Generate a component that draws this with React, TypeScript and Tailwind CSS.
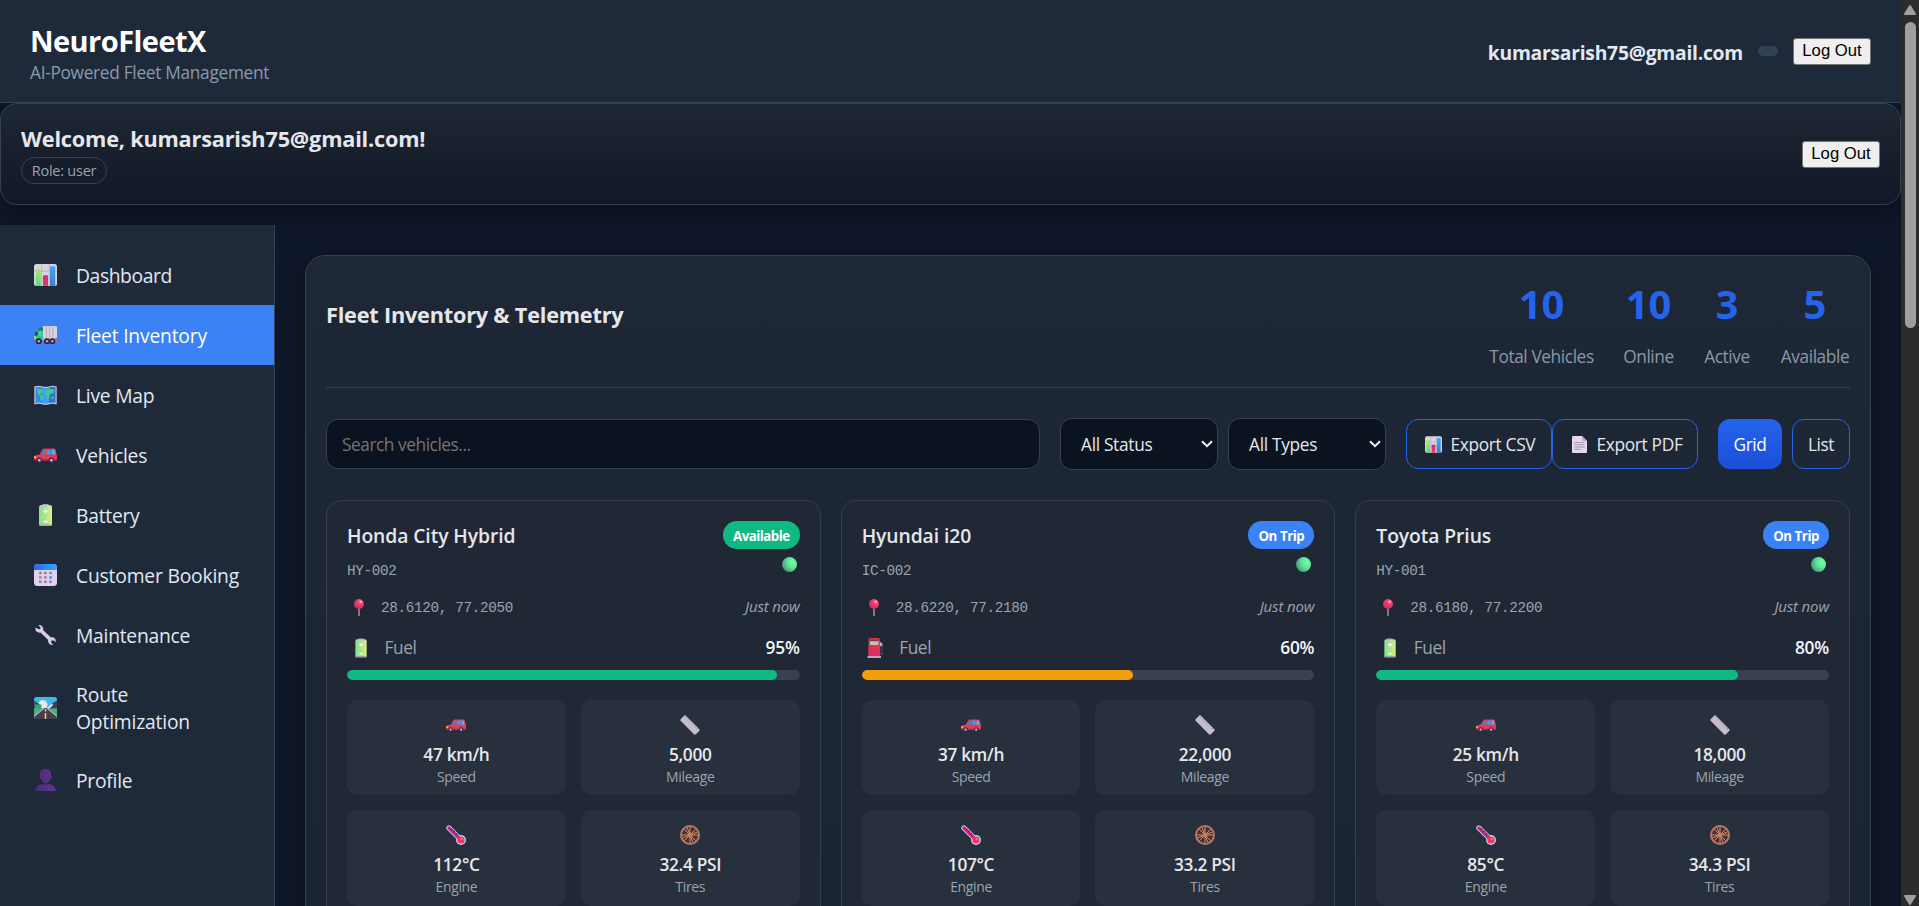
import type { ReactNode } from "react";

type IconProps = { className?: string };

const ChartIcon = ({ className }: IconProps) => (
  <svg className={className} viewBox="0 0 23 22">
    <defs>
      <linearGradient id="cg" x1="0" y1="0" x2="0" y2="1"><stop offset="0" stopColor="#b4e85a" /><stop offset="1" stopColor="#4fdc8a" /></linearGradient>
      <linearGradient id="cr" x1="0" y1="0" x2="0" y2="1"><stop offset="0" stopColor="#c92f72" /><stop offset="1" stopColor="#f0386a" /></linearGradient>
      <linearGradient id="cb" x1="0" y1="0" x2="0" y2="1"><stop offset="0" stopColor="#3fa9f2" /><stop offset="1" stopColor="#3b7fd0" /></linearGradient>
    </defs>
    <rect width="23" height="22" rx="2.5" fill="#d9d2e0" />
    <path d="M7.7 0v22M15.2 0v22M0 7.3h23M0 14.6h23" stroke="#bdb4c6" strokeWidth="0.9" />
    <rect x="1.8" y="5" width="5" height="17" rx="0.8" fill="url(#cg)" />
    <rect x="9" y="11.2" width="5" height="10.8" rx="0.8" fill="url(#cr)" />
    <rect x="16" y="2.2" width="5.2" height="19.8" rx="0.8" fill="url(#cb)" />
  </svg>
);

const TruckIcon = ({ className }: IconProps) => (
  <svg className={className} viewBox="0 0 23 22">
    <rect x="8.8" y="2" width="14.2" height="12.5" rx="1" fill="#d9d2dd" />
    <path d="M12.300 2v12.500M15.600 2v12.500M19 2v12.500" stroke="#b4abba" strokeWidth="1" />
    <path d="M2.600 5.500Q4.500 4 9 4V16H0V11.500Z" fill="#35c489" />
    <path d="M3.500 5.200Q6 3.600 9 3.800V6.500H3Z" fill="#237a55" />
    <path d="M1.600 7.500H3.600V11.500H.600Z" fill="#1c3c62" />
    <path d="M4.800 7.500H8V12H4.500Z" fill="#46c8c0" />
    <rect x="0" y="12.300" width="2" height="2.200" fill="#ffb43d" />
    <path d="M8.500 14.300H23V16.500H8.500Z" fill="#c5bbcb" />
    <rect x="21.300" y="14" width="1.700" height="2" fill="#e8427a" />
    {[4.8, 13, 18.4].map((x) => (
      <g key={x}><circle cx={x} cy="17.300" r="3" fill="#33213f" /><circle cx={x} cy="17.300" r="1.200" fill="#b9aec0" /></g>
    ))}
  </svg>
);

const MapIcon = ({ className }: IconProps) => (
  <svg className={className} viewBox="0 0 23 22">
    <path d="M.300 2.500Q4 1 7.700 2.200Q11.500 3.400 15.300 2.200Q19 1 22.700 2.500V20.500Q19 19.200 15.300 20.200Q11.500 21.400 7.700 20.200Q4 19.200.300 20.500Z" fill="#c9bfe0" />
    <path d="M1.500 3.300Q5 2.200 8 3.400V19Q5 18 1.500 19Z" fill="#2f8fe0" />
    <path d="M8 3.400Q11.500 4.500 15 3.400V19Q11.500 20.200 8 19Z" fill="#3aa0ef" />
    <path d="M15 3.400Q18.500 2.200 21.500 3.300V19Q18.500 18 15 19Z" fill="#2878cf" />
    <path d="M2.500 5.500L6 5L8.800 6.500L8.200 8.500L6.500 9L6.300 10.500L8.800 12.300L9.300 13.500L7.600 17L6.500 16L6.300 12.500L4.500 10.500Z" fill="#47c98c" />
    <path d="M11 6.500L14 6L16 4.800L20 5.500L20.300 8L18 10L16.500 9.200L15.800 10.500L14.500 14.500L13 14.800L12.500 11.500L10.800 10.500L11 8.800L12.500 8Z" fill="#47c98c" />
    <circle cx="18.600" cy="13.800" r="1.300" fill="#47c98c" />
  </svg>
);

const CarIcon = ({ className }: IconProps) => (
  <svg className={className} viewBox="0 0 23 22">
    <path d="M8 6Q8.600 4.600 10.500 4.600H20Q21.400 4.600 21.700 6L23 12V15.500Q23 16.600 21.500 16.600H1.500Q0 16.600 0 15V13.500Q0 11.600 2 11.200L5.500 10.500Z" fill="#e93a4e" />
    <path d="M7 10.400L9.400 6.500Q9.800 5.800 10.800 5.800H12V10.600Z" fill="#2b8be0" />
    <path d="M13 5.800H16.800V10.600H13Z" fill="#3f9bef" />
    <path d="M17.800 5.800H19.800Q20.500 5.800 20.700 6.500L21.600 10.600H17.800Z" fill="#4db4f8" />
    <rect x="0" y="12.300" width="2.200" height="2" rx="0.800" fill="#ffd24a" />
    <path d="M.300 15.200H22.800V16.600H.800Z" fill="#a3284f" />
    {[5.3, 17.4].map((x) => (
      <g key={x}><circle cx={x} cy="16.300" r="2.700" fill="#46295a" /><circle cx={x} cy="16.300" r="1.250" fill="#cfc3dc" /></g>
    ))}
  </svg>
);

const BatteryIcon = ({ className }: IconProps) => (
  <svg className={className} viewBox="0 0 23 22">
    <defs>
      <linearGradient id="bt"><stop offset="0" stopColor="#86dd92" /><stop offset="0.500" stopColor="#a8e58c" /><stop offset="1" stopColor="#dcf283" /></linearGradient>
    </defs>
    <path d="M8.500 0H14.500V1.500H8.500Z" fill="#a9a3ab" />
    <path d="M5.500 2.200Q5.500 .900 7 .900H16Q17.800 .900 17.800 2.200V3H5.200Z" fill="#c9c3c9" />
    <rect x="5" y="2.500" width="13" height="18.500" fill="url(#bt)" />
    <path d="M5 20.600H18V21Q18 22 17 22H6Q5 22 5 21Z" fill="#a79fab" />
    <path d="M11.500 5.200V9.200M9.500 7.200H13.500M9.500 17.500H13.500" stroke="#fff" strokeWidth="1.400" />
  </svg>
);

const CalendarIcon = ({ className }: IconProps) => (
  <svg className={className} viewBox="0 0 23 22">
    <defs>
      <linearGradient id="cal"><stop offset="0" stopColor="#2f62e8" /><stop offset="0.600" stopColor="#2c93fb" /><stop offset="1" stopColor="#31a2fb" /></linearGradient>
    </defs>
    <rect width="23" height="22" rx="3.500" fill="#dfd2ee" />
    <path d="M0 6V3.500Q0 0 3.500 0H19.500Q23 0 23 3.500V6Z" fill="url(#cal)" />
    {[7.8, 12.2, 16.6].map((y, r) =>
      [5, 10, 15.2].map((x, c) => (
        <rect key={`${x}-${y}`} x={x} y={y} width="2.700" height="2.400" rx="0.500" fill={r === 1 && c === 2 ? "#2a90f5" : "#8f83a0"} />
      ))
    )}
  </svg>
);

const WrenchIcon = ({ className }: IconProps) => (
  <svg className={className} viewBox="0 0 23 22">
    <path d="M4.200 1.200L6.500 3.200L6.300 4.800L4.800 5.200L1.600 3.500Q.800 6 2.500 7.600Q4 9 6.400 8.500L14 15.700Q13.600 18.200 15.500 20Q17 21.200 19.200 20.800L17 18.500L17.600 16.700L19.400 16.200L21.600 18.300Q22.300 16 20.700 14.300Q19.200 12.900 16.700 13.300L9.300 6.200Q9.700 3.700 8.100 2.200Q6.400.700 4.200 1.200Z" fill="#d9cbe6" />
  </svg>
);

const RoadIcon = ({ className }: IconProps) => (
  <svg className={className} viewBox="0 0 23 22">
    <defs><clipPath id="rc"><rect width="23" height="22" rx="2.500" /></clipPath></defs>
    <g clipPath="url(#rc)">
      <rect width="23" height="22" fill="#3fb8ea" />
      <path d="M4 11Q3 4 8.500 3Q13 3.500 13.500 8L12 12Z" fill="#ece8ee" />
      <path d="M12 12L18 6.500L23 3.500V12Z" fill="#4b3b56" />
      <path d="M13.500 10.500L18 6.500L19 8L15 12H12Z" fill="#f0ecf2" />
      <path d="M0 3.500L5.500 7V11.500H0Z" fill="#44505f" />
      <path d="M1 7.500H7.500V12H1Z" fill="#36a578" />
      <path d="M0 11.500H23V22H0Z" fill="#4fae7d" />
      <path d="M10.500 11H12.500L23 20V22H0V20Z" fill="#473b4d" />
      <path d="M10.300 11.200L0 19.600M12.700 11.200L23 19.600" stroke="#d5ccd9" strokeWidth="0.800" />
      <path d="M11.500 12V14.500M11.500 16V22" stroke="#ffc93d" strokeWidth="1.500" />
    </g>
  </svg>
);

const ProfileIcon = ({ className }: IconProps) => (
  <svg className={className} viewBox="0 0 23 22">
    <defs>
      <linearGradient id="pf" x1="0" y1="0" x2="1" y2="0"><stop offset="0" stopColor="#4a2a72" /><stop offset="1" stopColor="#5e3690" /></linearGradient>
    </defs>
    <path d="M6 4Q6 0 11.500 0Q17 0 17 4V6.500Q18 7 17.500 8.500Q17.200 9.500 16.600 9.500Q15.800 12 14 13.200V15Q21.500 16 22 22H1Q1.500 16 9 15V13.200Q7.200 12 6.400 9.500Q5.800 9.500 5.500 8.500Q5 7 6 6.500Z" fill="url(#pf)" />
    <path d="M9 13.600Q11.500 15 14 13.600V15Q11.500 16.400 9 15Z" fill="#3d2160" />
  </svg>
);

const PageIcon = ({ className }: IconProps) => (
  <svg className={className} viewBox="0 0 15 17">
    <path d="M1.500 0H10L15 5V16Q15 17 14 17H1Q0 17 0 16V1.200Q0 0 1.500 0Z" fill="#e4d8ee" />
    <path d="M10 0L15 5H11Q10 5 10 4Z" fill="#b9a9c8" />
    <path d="M2.500 6.500H12.500M2.500 8.800H12.500M2.500 11H12.500M2.500 13.200H8.500" stroke="#9a8bab" strokeWidth="0.900" />
  </svg>
);

const PinIcon = ({ className }: IconProps) => (
  <svg className={className} viewBox="0 0 10 17">
    <defs><radialGradient id="pin" cx="0.650" cy="0.300" r="0.700"><stop offset="0" stopColor="#ff7aa0" /><stop offset="0.400" stopColor="#f5386d" /><stop offset="1" stopColor="#c8305e" /></radialGradient></defs>
    <path d="M5 9.500V17" stroke="#8f8599" strokeWidth="1.700" />
    <circle cx="5" cy="5" r="5" fill="url(#pin)" />
    <circle cx="6.800" cy="2.800" r="1" fill="#ffc3d4" />
  </svg>
);

const PumpIcon = ({ className }: IconProps) => (
  <svg className={className} viewBox="0 0 20 20">
    <path d="M13.500 3.500L16.200 5.800V16.500H14V8" fill="none" stroke="#5d3f4e" strokeWidth="1.200" />
    <path d="M2.500 2Q2.500 0 4.500 0H12Q14 0 14 2V18H2.500Z" fill="#e53246" />
    <path d="M2.500 11H14V18H2.500Z" fill="#d63167" />
    <rect x="4" y="1.500" width="8.500" height="5.500" fill="#5d4456" />
    <path d="M4 3.200H12.500V7H4Z" fill="#c9bcc9" />
    <path d="M14 4L16.200 5.500V8H14Z" fill="#b9aebb" />
    <rect x="1.500" y="18" width="13.500" height="2" fill="#c1a5b6" />
  </svg>
);

const RulerIcon = ({ className }: IconProps) => (
  <svg className={className} viewBox="0 0 20 20">
    <path d="M4.300.600Q5 0 5.700.600L19.400 14.200Q20 15 19.400 15.700L15.600 19.400Q14.800 20 14.200 19.400L.600 5.800Q0 5 .600 4.300Z" fill="#c5bdcb" />
    <path d="M6.500 1.800L5.400 2.900M8.800 4L7.700 5.100M11 6.200L9.900 7.300M13.200 8.500L12.100 9.600M15.500 10.800L14.400 11.900M17.700 13L16.600 14.100" stroke="#8d6fd0" strokeWidth="1" />
  </svg>
);

const ThermoIcon = ({ className }: IconProps) => (
  <svg className={className} viewBox="0 0 20 20">
    <path d="M2.900 2.900L14 14" stroke="#a9d4f5" strokeWidth="5.200" strokeLinecap="round" />
    <circle cx="15" cy="15" r="5" fill="#a9d4f5" />
    <path d="M2.900 2.900L14 14" stroke="#d81b78" strokeWidth="3.200" strokeLinecap="round" />
    <path d="M6.300 3.700L5.200 4.800M8.700 6L7.600 7.100M11 8.300L9.900 9.400" stroke="#3c2a55" strokeWidth="1.300" />
    <circle cx="15" cy="15" r="3.600" fill="#f8315f" />
    <circle cx="15.700" cy="14" r="1.100" fill="#ff7d94" />
  </svg>
);

const WheelIcon = ({ className }: IconProps) => (
  <svg className={className} viewBox="0 0 20 20">
    <circle cx="10" cy="10" r="9" fill="#4c302f" stroke="#b8766b" strokeWidth="2" />
    <path d="M10 2V18M2 10H18M4.300 4.300L15.700 15.700M15.700 4.300L4.300 15.700M7 2.600L13 17.400M17.400 7L2.600 13" stroke="#e0a070" strokeWidth="0.900" />
    <circle cx="10" cy="10" r="2.500" fill="#c27c68" />
  </svg>
);

const GreenDot = ({ className }: IconProps) => (
  <svg className={className} viewBox="0 0 15 15">
    <defs><radialGradient id="gd" cx="0.750" cy="0.350" r="0.800"><stop offset="0" stopColor="#72ffa6" /><stop offset="0.450" stopColor="#5fe797" /><stop offset="1" stopColor="#478f80" /></radialGradient></defs>
    <circle cx="7.500" cy="7.500" r="7.500" fill="url(#gd)" />
  </svg>
);

const Chevron = () => (
  <svg className="h-[8px] w-[12px]" viewBox="0 0 12 8" fill="none">
    <path d="M1 1.200L6 6.200L11 1.200" stroke="#f1f5f9" strokeWidth="2" />
  </svg>
);

function LogOut() {
  return (
    <button className="h-[27px] w-[78px] rounded-[3px] border border-[#767676] bg-[#efefef] pt-px font-['Liberation_Sans',sans-serif] text-[16.67px] leading-none text-black">
      Log Out
    </button>
  );
}

const nav: { label: ReactNode; Icon: (p: IconProps) => ReactNode; active?: boolean; tall?: boolean }[] = [
  { label: <span className="tracking-[-0.400px]">Dashboard</span>, Icon: ChartIcon },
  { label: <span className="tracking-[-0.200px]">Fleet Inventory</span>, Icon: TruckIcon, active: true },
  { label: "Live Map", Icon: MapIcon },
  { label: "Vehicles", Icon: CarIcon },
  { label: "Battery", Icon: BatteryIcon },
  { label: <span className="tracking-[-0.200px]">Customer Booking</span>, Icon: CalendarIcon },
  { label: "Maintenance", Icon: WrenchIcon },
  { label: <span className="tracking-[-0.180px]">Route Optimization</span>, Icon: RoadIcon, tall: true },
  { label: "Profile", Icon: ProfileIcon },
];

const stats = [
  { value: "10", label: "Total Vehicles", w: "w-[104px]" },
  { value: "10", label: "Online", w: "w-[51px]" },
  { value: "3", label: "Active", w: "w-[47px]" },
  { value: "5", label: "Available", w: "w-[70px]" },
];

const vehicles = [
  { name: "Honda City Hybrid", id: "HY-002", status: "Available", pos: "28.6120, 77.2050", fuel: 95, electric: true, speed: 47, mileage: "5,000", temp: 112, psi: "32.4" },
  { name: "Hyundai i20", id: "IC-002", status: "On Trip", pos: "28.6220, 77.2180", fuel: 60, electric: false, speed: 37, mileage: "22,000", temp: 107, psi: "33.2" },
  { name: "Toyota Prius", id: "HY-001", status: "On Trip", pos: "28.6180, 77.2200", fuel: 80, electric: true, speed: 25, mileage: "18,000", temp: 85, psi: "34.3" },
];

function Tile({ icon, value, label }: { icon: ReactNode; value: string; label: string }) {
  return (
    <div className="flex h-[95.3px] flex-col items-center rounded-[10px] bg-[#27303c] pt-[15px]">
      {icon}
      <div className="mt-2 h-6 text-[17.3px] leading-6 font-semibold tracking-[-0.320px] text-[#e5e7eb]">{value}</div>
      <div className="h-5 text-[14px] leading-[20px] tracking-[-0.350px] text-[#9ca3af]">{label}</div>
    </div>
  );
}

function VehicleCard({ v }: { v: (typeof vehicles)[number] }) {
  return (
    <div className="min-w-0 rounded-[15px] border border-[#343e4c] bg-[#202836] px-5 pt-5 pb-10">
      <div className="flex h-[60px] justify-between">
        <div>
          <div className="h-7 text-[19.3px] leading-[30px] font-semibold tracking-[-0.080px] text-[#e5e7eb]">{v.name}</div>
          <div className="mt-[11px] font-['Liberation_Mono',monospace] text-[14.3px] leading-[22px] tracking-[-0.330px] text-[#9ca3af]">{v.id}</div>
        </div>
        <div className="flex flex-col items-end">
          <div className={`flex h-7 items-center rounded-full px-[10px] text-[13.3px] leading-7 font-bold text-white ${v.status === "Available" ? "bg-[#10b981] tracking-[-0.520px]" : "bg-[#3b82f6] tracking-[-0.450px]"}`}>
            <span className="pt-[2px]">{v.status}</span>
          </div>
          <GreenDot className="mt-2 mr-[3px] h-[15px] w-[15px]" />
        </div>
      </div>
      <div className="mt-4 flex h-5 items-center">
        <PinIcon className="ml-[7px] h-[17px] w-[10px]" />
        <span className="ml-[17px] pt-[2px] font-['Liberation_Mono',monospace] text-[14.300px] leading-5 tracking-[-0.330px] text-[#9ca3af]">{v.pos}</span>
        <span className="ml-auto text-[15px] leading-[18px] tracking-[-0.150px] text-[#9ca3af] italic -mt-[2px]">Just now</span>
      </div>
      <div className="mt-[19px] flex h-6 items-center">
        {v.electric ? <BatteryIcon className="ml-1 h-5 w-5" /> : <PumpIcon className="ml-1 h-5 w-5" />}
        <span className="ml-[13.500px] text-[17.3px] tracking-[-0.400px] text-[#9ca3af]">Fuel</span>
        <span className="ml-auto text-[17.3px] font-semibold tracking-[-0.200px] text-[#f1f5f9]">{v.fuel}%</span>
      </div>
      <div className="mt-[10px] h-[10px] overflow-hidden rounded-full bg-[#374151]">
        <div className={`h-full rounded-full ${v.fuel > 60 ? "bg-[#10b981]" : "bg-[#f59e0b]"}`} style={{ width: `${v.fuel}%` }} />
      </div>
      <div className="mt-5 grid grid-cols-2 gap-[15px]">
        <Tile icon={<CarIcon className="h-5 w-5" />} value={`${v.speed} km/h`} label="Speed" />
        <Tile icon={<RulerIcon className="h-5 w-5" />} value={v.mileage} label="Mileage" />
        <Tile icon={<ThermoIcon className="h-5 w-5" />} value={`${v.temp}°C`} label="Engine" />
        <Tile icon={<WheelIcon className="h-5 w-5" />} value={`${v.psi} PSI`} label="Tires" />
      </div>
    </div>
  );
}

function Select({ label }: { label: string }) {
  return (
    <div className="flex h-[52px] w-[158px] items-center justify-between rounded-xl border border-[#374151] bg-[#0b1220] pr-1 pl-[20px] text-[17.3px] tracking-[-0.300px] text-[#e5e7eb]">
      <span className="pt-[2px]">{label}</span>
      <Chevron />
    </div>
  );
}

export default function App() {
  return (
    <div className="flex h-[906px] w-full overflow-hidden bg-[#0f172a] font-['Open_Sans','Noto_Sans',sans-serif] text-[#e2e8f0]">
      <div className="flex h-full min-w-0 flex-1 flex-col overflow-hidden">
        <header className="z-10 flex h-[103px] shrink-0 items-start justify-between border-b border-[#334155] bg-[#1e293a] px-[30px] pt-5">
          <div>
            <div className="h-10 text-[29px] leading-[41px] font-bold tracking-[-0.550px] text-white">NeuroFleetX</div>
            <div className="h-6 text-[17.3px] leading-[25px] tracking-[-0.300px] text-[#8a99ad]">AI-Powered Fleet Management</div>
          </div>
          <div className="flex h-[62px] items-center">
            <span className="pt-1 text-[19.3px] font-bold tracking-[-0.250px]">kumarsarish75@gmail.com</span>
            <span className="ml-[15px] h-[10px] w-5 rounded-full bg-[#334155]" />
            <span className="ml-[15px] flex"><LogOut /></span>
          </div>
        </header>

        <section className="flex h-[102px] shrink-0 items-center justify-between rounded-[17px] border border-[#374151] bg-linear-to-b from-[#1e2734] to-[#111827] px-5 shadow-[0_10px_30px_rgba(0,0,0,0.35)]">
          <div className="h-[62px]">
            <div className="h-[31px] pt-px text-[21.7px] leading-[30px] font-bold tracking-[-0.190px] text-[#e5e7eb]">Welcome, kumarsarish75@gmail.com!</div>
            <div className="mt-[3px] flex h-[27px] w-[86px] items-center justify-center rounded-full border border-[#374151] pt-px text-[14.500px] tracking-[-0.250px] text-[#9ca3af]">Role: user</div>
          </div>
          <LogOut />
        </section>

        <div className="mt-5 flex min-h-0 flex-1">
          <aside className="z-10 w-[275px] shrink-0 border-r border-[#334155] bg-[#1e293a] pt-5">
            {nav.map(({ label, Icon, active, tall }, i) => (
              <div key={i} className={`flex items-center pl-[30px] ${tall ? "h-[85px]" : "h-[60px]"} ${active ? "bg-[#3b82f6] text-white" : "text-[#e2e8f0]"}`}>
                <span className="flex w-[31px] justify-center"><Icon className="h-[22px] w-[23px]" /></span>
                <span className={`ml-[15px] text-[19.3px] leading-[27px] tracking-[-0.250px] ${tall ? "w-[130px]" : "pt-px"}`}>{label}</span>
              </div>
            ))}
          </aside>

          <main className="min-w-0 flex-1 px-[30px] pt-[30px]">
            <div className="h-[1400px] rounded-[20px] border border-[#374151] bg-linear-to-b from-[#1e2735] to-[#182130] px-5 pt-5 shadow-[0_10px_30px_rgba(0,0,0,0.35)]">
              <div className="flex h-[112px] items-start justify-between border-b border-[#374151]">
                <h2 className="mt-6 text-[21.7px] leading-[30px] font-bold tracking-[-0.210px] text-[#e5e7eb]">Fleet Inventory &amp; Telemetry</h2>
                <div className="flex gap-[29.500px]">
                  {stats.map((s) => (
                    <div key={s.label} className={`flex flex-col items-center ${s.w}`}>
                      <div className="h-[53px] text-[40px] leading-[55px] font-bold text-[#2563eb]">{s.value}</div>
                      <div className="mt-4 h-6 text-[17.3px] leading-6 tracking-[-0.400px] whitespace-nowrap text-[#8b98ab]">{s.label}</div>
                    </div>
                  ))}
                </div>
              </div>

              <div className="mt-[30px] flex h-[52px] items-center">
                <div className="flex h-[50px] flex-1 items-center rounded-xl border border-[#374151] bg-[#0b1220] px-[15px] pt-[2px] text-[17.3px] tracking-[-0.450px] text-[#757575]">Search vehicles...</div>
                <div className="ml-5 flex gap-[10px]">
                  <Select label="All Status" />
                  <Select label="All Types" />
                </div>
                <div className="ml-5 flex text-[17.3px] tracking-[-0.320px] text-[#e5e7eb]">
                  <button className="flex h-[50px] w-[146px] items-center rounded-xl border border-[#2563eb] pl-[18px] whitespace-nowrap">
                    <ChartIcon className="mr-[8.500px] h-[17px] w-[17px] shrink-0" /><span className="pt-[2px]">Export CSV</span>
                  </button>
                  <button className="flex h-[50px] w-[146px] items-center rounded-xl border border-[#2563eb] pl-[19px] whitespace-nowrap">
                    <PageIcon className="mr-[9.500px] h-[17px] w-[15px] shrink-0" /><span className="pt-[2px]">Export PDF</span>
                  </button>
                </div>
                <div className="ml-5 flex gap-[10px] text-[17.3px] tracking-[-0.400px]">
                  <button className="h-[50px] w-[64px] rounded-xl bg-linear-to-b from-[#2563eb] to-[#1d4ed8] pt-[2px] text-white">Grid</button>
                  <button className="h-[50px] w-[58px] rounded-xl border border-[#2563eb] pt-[2px] text-[#e5e7eb]">List</button>
                </div>
              </div>

              <div className="mt-[30px] grid grid-cols-3 gap-5">
                {vehicles.map((v) => <VehicleCard key={v.id} v={v} />)}
              </div>
            </div>
          </main>
        </div>
      </div>

      <div className="flex h-full w-[18px] shrink-0 flex-col items-center bg-[#2c2c2c]">
        <svg className="mt-[5px] h-[10px] w-[12px]" viewBox="0 0 12 10"><path d="M6 0Q6.600 0 7 .700L11.800 8.500Q12.200 10 11 10H1Q-.200 10 .200 8.500L5 .700Q5.400 0 6 0Z" fill="#9f9f9f" /></svg>
        <div className="mt-[7px] h-[306px] w-[11px] rounded-full bg-[#9f9f9f]" />
        <svg className="mt-auto mb-px h-[10px] w-[12px]" viewBox="0 0 12 10"><path d="M6 10Q6.600 10 7 9.300L11.800 1.500Q12.200 0 11 0H1Q-.200 0 .200 1.500L5 9.300Q5.400 10 6 10Z" fill="#9f9f9f" /></svg>
      </div>
    </div>
  );
}
